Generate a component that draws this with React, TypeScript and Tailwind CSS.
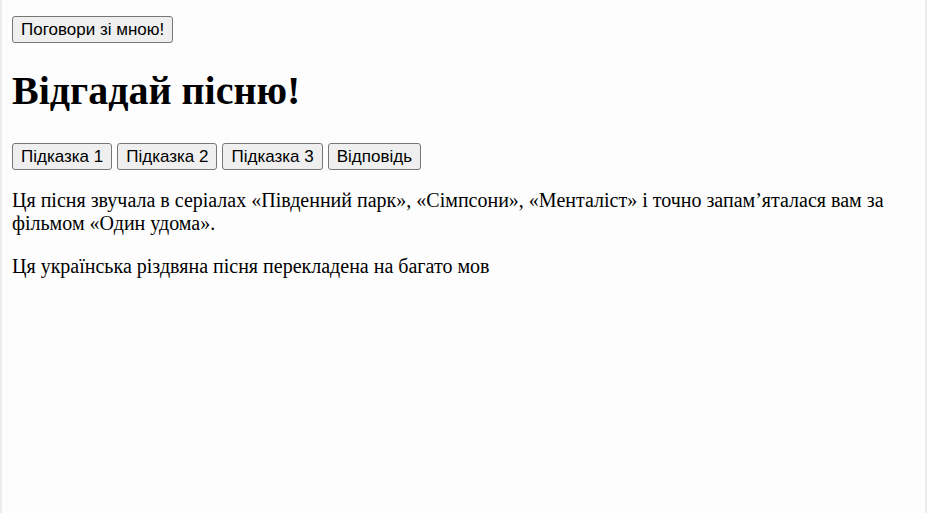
export default function App() {
  const hints = ['Підказка 1', 'Підказка 2', 'Підказка 3', 'Відповідь'];
  const btn =
    "h-[27px] px-[8px] border border-[#767676] rounded-[3px] bg-[#efefef] text-[17px] leading-none text-black font-['Liberation_Sans',Arial,sans-serif]";

  return (
    <div className="min-h-screen bg-[#fdfdfd] border-l-2 border-r-2 border-[#ececec] pl-[10px] pr-[10px] pt-[16px] text-black font-['Liberation_Serif','Times_New_Roman',serif]">
      <button className={btn}>Поговори зі мною!</button>

      <h1 className="mt-[25px] text-[40px] font-bold leading-[46px]">Відгадай пісню!</h1>

      <div className="mt-[29px] flex gap-[5px]">
        {hints.map((h) => (
          <button key={h} className={btn}>
            {h}
          </button>
        ))}
      </div>

      <p className="mt-[19px] text-[20px] leading-[23px]">
        Ця пісня звучала в серіалах «Південний парк», «Сімпсони», «Менталіст» і точно запам’яталася вам за фільмом «Один удома».
      </p>
      <p className="mt-[20px] text-[20px] leading-[23px]">Ця українська різдвяна пісня перекладена на багато мов</p>
    </div>
  );
}
